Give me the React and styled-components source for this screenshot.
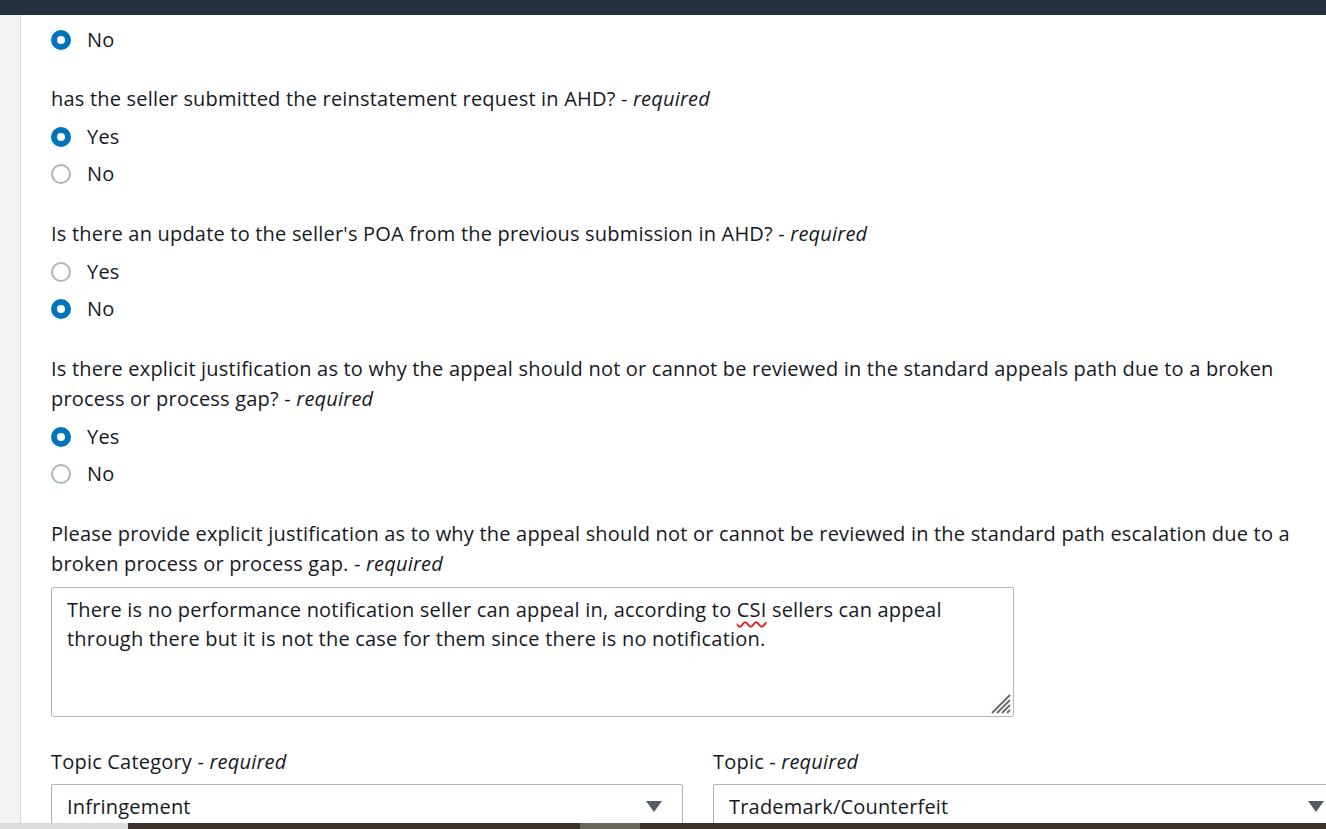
import React from "react";
import styled, { createGlobalStyle } from "styled-components";

const GlobalStyle = createGlobalStyle`
  html, body {
    margin: 0;
    height: 100%;
    overflow: hidden;
  }
  body {
    font-family: "Open Sans", "Noto Sans", sans-serif;
    color: #16191f;
    background: #fff;
  }
`;

const Page = styled.div`
  height: 100vh;
  display: flex;
  flex-direction: column;
`;

const TopBar = styled.div`
  height: 15px;
  flex: none;
  background-color: #232f3e;
`;

const Body = styled.div`
  flex: 1;
  min-height: 0;
  display: flex;
  overflow: hidden;
`;

const SideRail = styled.div`
  width: 20px;
  flex: none;
  background-color: #f2f3f3;
  border-right: 1px solid #d5dbdb;
`;

const Content = styled.main`
  flex: 1;
  min-width: 0;
  padding: 6px 0 0 30px;
  overflow: hidden;
`;

const Field = styled.section`
  margin-bottom: ${(p) => p.$gap ?? 27}px;
`;

const Label = styled.div`
  font-size: 20px;
  letter-spacing: 0.2px;
  line-height: 30px;
  max-width: 1268px;

  em {
    font-style: italic;
  }
`;

const RadioGroup = styled.div`
  display: flex;
  flex-direction: column;
  margin-top: ${(p) => (p.$flush ? 0 : 4)}px;
`;

const RadioRow = styled.label`
  display: flex;
  align-items: center;
  gap: 16px;
  height: 37px;
  font-size: 20px;
  letter-spacing: 0.2px;
`;

const RadioDot = styled.span`
  width: 20px;
  height: 20px;
  box-sizing: border-box;
  border-radius: 50%;
  background: #fff;
  border: ${(p) => (p.$checked ? "6px solid #0073bb" : "2px solid #aab7b8")};
`;

const TextBox = styled.div`
  position: relative;
  width: 963px;
  height: 130px;
  box-sizing: border-box;
  margin-top: 8px;
  padding: 7px 15px;
  border: 1px solid #aab7b8;
  border-radius: 2px;
  font-size: 20px;
  letter-spacing: 0.2px;
  line-height: 29px;
  overflow: hidden;
`;

const Grip = styled.svg`
  position: absolute;
  right: 2px;
  bottom: 2px;
`;

const Misspelled = styled.span`
  text-decoration: underline wavy #e02020;
  text-decoration-thickness: 1.5px;
  text-decoration-skip-ink: none;
  text-underline-offset: 4px;
`;

const SelectRow = styled.div`
  display: grid;
  grid-template-columns: 632px 632px;
  column-gap: 30px;
  margin-top: 30px;
`;

const SelectBox = styled.div`
  height: 44px;
  box-sizing: border-box;
  margin-top: 7px;
  padding: 0 20px 0 15px;
  display: flex;
  align-items: center;
  justify-content: space-between;
  border: 1px solid #aab7b8;
  border-radius: 2px;
  font-size: 20px;
  letter-spacing: 0.2px;
`;

const Taskbar = styled.div`
  height: 6px;
  flex: none;
  display: flex;
  background: #3b3229;
`;

const TaskSegment = styled.div`
  width: ${(p) => p.$w}px;
  background: ${(p) => p.$bg};
`;

const Radio = ({ label, checked }) => (
  <RadioRow>
    <RadioDot $checked={checked} />
    {label}
  </RadioRow>
);

const Caret = () => (
  <svg width="16" height="11" viewBox="0 0 16 11">
    <path d="M0 0 H16 L8 11 Z" fill="#545b64" />
  </svg>
);

const ResizeGrip = () => (
  <Grip width="22" height="22" viewBox="0 0 22 22">
    <g stroke="#6b6b6b" strokeWidth="2" strokeLinecap="butt">
      <line x1="21" y1="3" x2="3" y2="21" />
      <line x1="21" y1="8" x2="8" y2="21" />
      <line x1="21" y1="13" x2="13" y2="21" />
      <line x1="21" y1="18" x2="18" y2="21" />
    </g>
  </Grip>
);

const Select = ({ label, value }) => (
  <div>
    <Label>
      {label} - <em>required</em>
    </Label>
    <SelectBox>
      {value}
      <Caret />
    </SelectBox>
  </div>
);

const App = () => {
  return (
    <Page>
      <GlobalStyle />
      <TopBar />
      <Body>
        <SideRail />
        <Content>
          <Field $gap={26}>
            <RadioGroup $flush>
              <Radio label="No" checked />
            </RadioGroup>
          </Field>

          <Field>
            <Label>
              has the seller submitted the reinstatement request in AHD? - <em>required</em>
            </Label>
            <RadioGroup>
              <Radio label="Yes" checked />
              <Radio label="No" />
            </RadioGroup>
          </Field>

          <Field>
            <Label>
              Is there an update to the seller's POA from the previous submission in AHD? -{" "}
              <em>required</em>
            </Label>
            <RadioGroup>
              <Radio label="Yes" />
              <Radio label="No" checked />
            </RadioGroup>
          </Field>

          <Field>
            <Label>
              Is there explicit justification as to why the appeal should not or cannot be
              reviewed in the standard appeals path due to a broken process or process gap? -{" "}
              <em>required</em>
            </Label>
            <RadioGroup>
              <Radio label="Yes" checked />
              <Radio label="No" />
            </RadioGroup>
          </Field>

          <Field $gap={0}>
            <Label>
              Please provide explicit justification as to why the appeal should not or cannot be
              reviewed in the standard path escalation due to a broken process or process gap. -{" "}
              <em>required</em>
            </Label>
            <TextBox>
              There is no performance notification seller can appeal in, according to{" "}
              <Misspelled>CSI</Misspelled> sellers can appeal through there but it is not the
              case for them since there is no notification.
              <ResizeGrip />
            </TextBox>
          </Field>

          <SelectRow>
            <Select label="Topic Category" value="Infringement" />
            <Select label="Topic" value="Trademark/Counterfeit" />
          </SelectRow>
        </Content>
      </Body>
      <Taskbar>
        <TaskSegment $w={128} $bg="#dcdcdc" />
        <TaskSegment $w={452} $bg="#3b3229" />
        <TaskSegment $w={60} $bg="#6b6560" />
      </Taskbar>
    </Page>
  );
};

export default App;
